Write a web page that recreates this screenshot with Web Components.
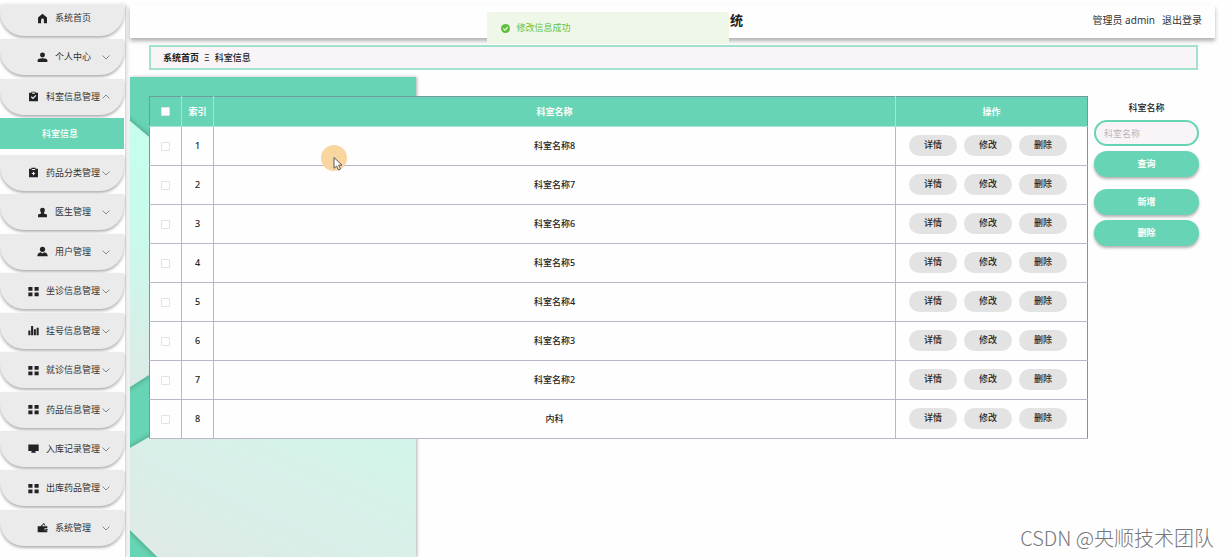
<!DOCTYPE html>
<html lang="zh-CN">
<head>
<meta charset="utf-8">
<title>科室信息</title>
<style>
html, body { margin: 0; background: #fefefe; }
body { font: 9px/14px "Noto Sans", "Noto Sans CJK SC", sans-serif; color: #333; overflow-x: hidden; }
</style>
</head>
<body>
<admin-app></admin-app>
<script>
const GREEN = '#67d5b5';
const ICONS = {
  home: '<path d="M8 1 1.500 6.500V15H6v-5a2 2 0 0 1 4 0v5h4.500V6.500z"/>',
  user: '<circle cx="8" cy="4.500" r="3.600"/><path d="M1 14.500v-2.500c0-2 2.500-3 7-3s7 1 7 3v2.500z"/>',
  check: '<path fill-rule="evenodd" d="M1.500 2.500H5V1h6v1.500h3.500V15h-13zm4.500-.5v2h4v-2zM4.200 9l3 3 5-5-1.200-1.200-3.800 3.800L5.400 7.800z"/>',
  board: '<path fill-rule="evenodd" d="M1.500 2.500H5V1h6v1.500h3.500V15h-13zm4 .5v1.500h5V3zm1.700 4v1.700H5.500v1.600h1.700V12h1.600v-1.700h1.700V8.700H8.800V7z"/>',
  stamp: '<path d="M8 1a3.500 3.500 0 0 0-3.500 3.500c0 2 1.500 3 1.500 5L1.500 11v4h13v-4L10 9.500c0-2 1.500-3 1.500-5A3.500 3.500 0 0 0 8 1z"/>',
  person: '<circle cx="8" cy="4.800" r="3.800"/><path d="M.5 15c0-4 2-5.500 5-6L8 11l2.500-2c3 .5 5 2 5 6z"/>',
  grid: '<path d="M.5 1.500h6v5.500h-6zM9.500 1.500h6v5.500h-6zM.5 9.500h6V15h-6zM9.500 9.500h6V15h-6z"/>',
  bars: '<path d="M.5 8h3v7h-3zM4.500 1.500h3V15h-3zM8.500 6h3v9h-3zM12.500 4h3v11h-3z"/>',
  screen: '<path d="M.5 2h15v9.500h-5l1 2.500h-7l1-2.500h-5z"/>',
  wallet: '<path fill-rule="evenodd" d="M1 6h4l5-4.500L12.500 5H11l-1.300-1.800L7 6h8v3h-4v3h4v3H1zM12 10h3.500v1.500H12z"/>'
};

function define(name, css, html, setup) {
  const template = document.createElement('template');
  template.innerHTML = '<style>:host,*{box-sizing:border-box}' + css + '</style>' + html;
  customElements.define(name, class extends HTMLElement {
    constructor() {
      super();
      this.attachShadow({ mode: 'open' }).append(template.content.cloneNode(true));
    }
    connectedCallback() { if (setup) setup(this.shadowRoot, this); }
  });
}

define('menu-item', `
:host { display: block; }
a { display: grid; grid-template-columns: 26px 1fr 22px; align-items: center; height: 36px;
  background: #ebebeb; border-radius: 0 0 24px 24px; box-shadow: 0 2px 3px rgba(0,0,0,.3); color: #333; text-decoration: none; }
:host([first]) a { height: 31px; padding-bottom: 5px; }
.text { grid-column: 2; display: flex; justify-content: center; align-items: center; gap: 7px; white-space: nowrap; }
.icon { width: 11px; height: 11px; fill: #222; flex: none; }
.arrow { width: 8px; height: 8px; fill: none; stroke: #888; }
:host([open]) .arrow { transform: rotate(180deg); }
:host([first]) .arrow { display: none; }`,
`<a href="#"><span class="text"><svg class="icon" viewBox="0 0 16 16"></svg><slot></slot></span>
<svg class="arrow" viewBox="0 0 8 8"><path d="M.5 2.500 4 6l3.500-3.500"/></svg></a>`,
(root, host) => { root.querySelector('.icon').innerHTML = ICONS[host.getAttribute('icon')]; });

define('side-menu', `
:host { display: block; width: 126px; padding-right: 1px; border-right: 1px solid #d9d9de; background: #fefefe; box-shadow: 1px 0 4px rgba(0,0,0,.15); }
nav { display: flex; flex-direction: column; justify-content: space-between; height: calc(100vh - 16px); min-height: max-content; }
.current { display: flex; align-items: center; justify-content: center; height: 31px; margin-bottom: 2px; padding-right: 4px;
  background: ${GREEN}; color: #fff; text-decoration: none; font-weight: 500; }`,
`<nav>
<menu-item icon="home" first>系统首页</menu-item>
<menu-item icon="user">个人中心</menu-item>
<menu-item icon="check" open>科室信息管理</menu-item>
<a class="current" href="#">科室信息</a>
<menu-item icon="board">药品分类管理</menu-item>
<menu-item icon="stamp">医生管理</menu-item>
<menu-item icon="person">用户管理</menu-item>
<menu-item icon="grid">坐诊信息管理</menu-item>
<menu-item icon="bars">挂号信息管理</menu-item>
<menu-item icon="grid">就诊信息管理</menu-item>
<menu-item icon="grid">药品信息管理</menu-item>
<menu-item icon="screen">入库记录管理</menu-item>
<menu-item icon="grid">出库药品管理</menu-item>
<menu-item icon="wallet">系统管理</menu-item>
</nav>`);

define('top-bar', `
:host { display: flex; align-items: center; justify-content: space-between; height: 33px; padding: 0 13px 4px 0;
  background: #fefefe; box-shadow: 0 3px 4px rgba(0,0,0,.3); font-size: 10px; }
h1 { margin: 0; width: calc(50% + 77px); text-align: right; font-size: 13px; line-height: 20px; color: #222; }
div { display: flex; gap: 7px; }
a { color: inherit; text-decoration: none; }`,
`<h1>统</h1><div><span>管理员 admin</span><a href="#">退出登录</a></div>`);

define('bread-crumb', `
:host { display: block; margin: 7px 17px 7px 19px; }
nav { display: flex; align-items: center; gap: 5px; height: 25px; padding: 0 12px; border: 2px solid #a3e2cf; background: #f9f4f8; color: #222; }
a { color: inherit; font-weight: 700; text-decoration: none; }
.last { font-weight: 500; }`,
`<nav aria-label="路径"><a href="#">系统首页</a><span>Ξ</span><span class="last">科室信息</span></nav>`);

define('page-art', `
:host { display: block; width: 286px; background: ${GREEN}; box-shadow: 1px 0 3px rgba(0,0,0,.3); overflow: hidden; }
svg { display: block; width: 286px; height: 100%; }`,
`<svg viewBox="0 0 286 480" preserveAspectRatio="xMinYMin slice">
<defs>
<linearGradient id="a" x1="0" y1="0" x2="0" y2="1"><stop offset="0" stop-color="#c5ffee"/><stop offset=".4" stop-color="#c8fbec"/><stop offset="1" stop-color="#dfe9e6"/></linearGradient>
<linearGradient id="b" gradientUnits="userSpaceOnUse" x1="290" y1="350" x2="190" y2="570"><stop offset="0" stop-color="#cff6ea"/><stop offset=".35" stop-color="#d7f1e9"/><stop offset=".6" stop-color="#d9eee8"/><stop offset="1" stop-color="#e0e9e6"/></linearGradient>
<filter id="s" x="-10%" y="-10%" width="120%" height="120%"><feDropShadow dx="0" dy="0" stdDeviation="3" flood-color="#000" flood-opacity=".35"/></filter>
</defs>
<g filter="url(#s)"><path fill="url(#a)" d="M-20 27 0 44 100 128V246L0 310l-20 13z"/>
<path fill="url(#b)" d="M-20 383 0 371 80 325H320V520H68L0 453l-20-20z"/></g></svg>`);

define('pill-button', `
:host { display: block; }
button { display: block; width: 100%; height: 26px; padding: 0; border: 0; border-radius: 13px; background: ${GREEN};
  color: #fff; font: inherit; font-weight: 700; box-shadow: 0 2px 3px rgba(0,0,0,.3); }
:host([plain]) button { width: 48px; height: 21px; background: #e3e3e3; color: #222; font-weight: 500; box-shadow: none; }`,
`<button type="button"><slot></slot></button>`);

define('dept-table', `
:host { display: block; }
table { width: 100%; table-layout: fixed; border-collapse: collapse; border: 1px solid #8d8aa3; background: #fefefe; text-align: center; }
th { height: 30px; padding: 0; background: ${GREEN}; color: #fff; border: 1px solid #a9e2d2; border-top-color: #6f9c9c; }
td { height: 39px; padding: 0; border: 1px solid #bab6c6; }
tr > :first-child { border-left-color: #8d8aa3; }
tr > :last-child { border-right-color: #8d8aa3; }
.narrow { width: 32px; }
.ops { width: 192px; }
td:nth-child(2), td:nth-child(3) { color: #222; font-weight: 500; }
input { appearance: none; display: block; width: 9px; height: 9px; margin: 0 auto; border: 1px solid #e2e2e6; border-radius: 1px; background: #fff; }
.actions { display: flex; justify-content: center; gap: 7px; padding: 0 7px 2px 0; }`,
`<table><colgroup><col class="narrow"><col class="narrow"><col><col class="ops"></colgroup>
<thead><tr><th><input type="checkbox" aria-label="全选"></th><th>索引</th><th>科室名称</th><th>操作</th></tr></thead><tbody></tbody></table>`,
root => {
  const names = ['科室名称8', '科室名称7', '科室名称6', '科室名称5', '科室名称4', '科室名称3', '科室名称2', '内科'];
  root.querySelector('tbody').innerHTML = names.map((name, i) => `<tr>
<td><input type="checkbox" aria-label="${name}"></td><td>${i + 1}</td><td>${name}</td>
<td><div class="actions"><pill-button plain>详情</pill-button><pill-button plain>修改</pill-button><pill-button plain>删除</pill-button></div></td></tr>`).join('');
});

define('search-panel', `
:host { display: block; }
form { display: flex; flex-direction: column; gap: 5px; padding-top: 5px; text-align: center; }
label { color: #222; font-weight: 500; }
input { width: 100%; height: 26px; padding: 0 8px; border: 2px solid #67d5b5; border-radius: 13px; background: #f9f4f8; font: inherit; }
input::placeholder { color: #b9b5bd; opacity: 1; }
.gap { margin-top: 7px; }`,
`<form><label for="name">科室名称</label><input id="name" type="text" placeholder="科室名称">
<pill-button>查询</pill-button><pill-button class="gap">新增</pill-button><pill-button>删除</pill-button></form>`);

define('toast-message', `
:host { display: flex; align-items: center; gap: 7px; width: 242px; height: 32px; padding: 0 14px; border-radius: 2px; background: #eff7e9; color: #67c23a; }
svg { width: 9px; height: 9px; }`,
`<svg viewBox="0 0 16 16"><circle cx="8" cy="8" r="8" fill="#5dbf3a"/><path d="m4 8 3 3 5-5.500" fill="none" stroke="#fff" stroke-width="1.800"/></svg><slot></slot>`);

define('click-pointer', `
:host { display: block; width: 26px; height: 30px; }
svg { display: block; }`,
`<svg width="26" height="30" viewBox="0 0 26 30"><circle cx="13" cy="13" r="13" fill="#f9d5a0"/>
<path d="M13 12.500v10.800l2.600-2.300 1.900 4 2-1-1.900-3.800h3.400z" fill="#fff" stroke="#555" stroke-width="1"/></svg>`);

define('admin-app', `
:host { position: relative; display: grid; grid-template-columns: 130px 1fr; min-height: 100vh; padding-top: 5px; margin-right: 14px; }
main { display: flex; flex-direction: column; min-width: 0; }
top-bar { position: relative; }
.panel { position: relative; flex: 1; display: grid; grid-template-columns: 1fr 105px; gap: 6px; align-items: start; padding: 19px 16px 0 19px; }
page-art { position: absolute; left: 0; top: 0; bottom: 0; }
dept-table { position: relative; }
toast-message { position: absolute; top: 12px; left: 50%; transform: translateX(-50%); }
click-pointer { position: absolute; left: 191px; top: 68px; }
.mark { position: absolute; right: 1px; bottom: 6px; font: 300 20px/26px "Noto Sans CJK SC", sans-serif; color: #777; }`,
`<side-menu></side-menu>
<main><top-bar></top-bar><bread-crumb></bread-crumb>
<div class="panel"><page-art></page-art><dept-table></dept-table><search-panel></search-panel><click-pointer></click-pointer></div></main>
<toast-message role="status">修改信息成功</toast-message><div class="mark">CSDN @央顺技术团队</div>`);
</script>
</body>
</html>
